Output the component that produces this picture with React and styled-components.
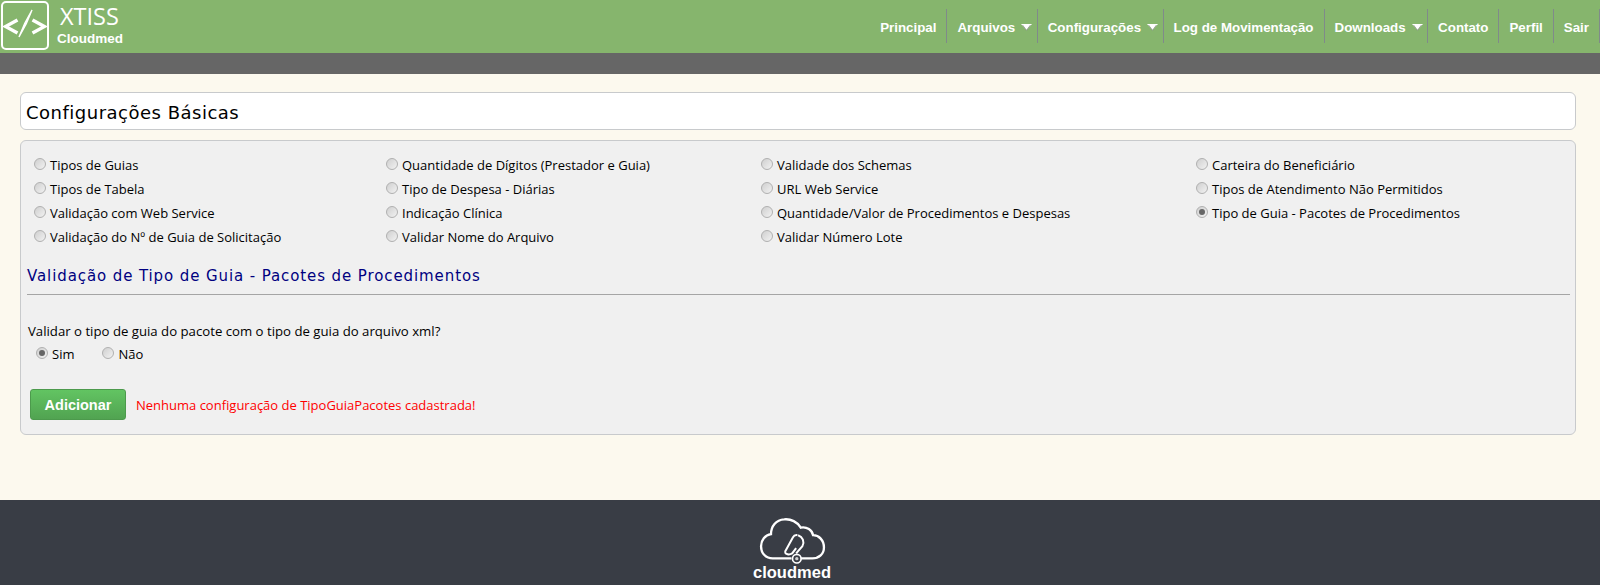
import React from 'react'
import styled, { createGlobalStyle } from 'styled-components'

const green = '#86b56d'
const body = '#fcf9ee'

const GlobalStyle = createGlobalStyle`
  html, body {
    margin: 0;
    padding: 0;
    background: ${body};
    font-family: 'Open Sans', 'Liberation Sans', sans-serif;
  }
`

const Page = styled.div`
  display: flex;
  flex-direction: column;
  width: 1600px;
  height: 585px;
  overflow: hidden;
`

const Header = styled.header`
  display: flex;
  justify-content: space-between;
  align-items: flex-start;
  height: 53px;
  background: ${green};
`

const Brand = styled.div`
  display: flex;
  padding-top: 1px;
  padding-left: 1px;
`

const LogoBox = styled.div`
  box-sizing: border-box;
  width: 48px;
  height: 49px;
  border: 2px solid #fff;
  border-radius: 5px;
`

const BrandText = styled.div`
  display: flex;
  flex-direction: column;
  margin-left: 8px;
  color: #fff;
`

const BrandName = styled.div`
  margin-left: 3px;
  font-family: 'Open Sans', sans-serif;
  font-size: 23.5px;
  line-height: 30px;
`

const BrandSub = styled.div`
  font-family: 'Liberation Sans', sans-serif;
  font-size: 13.5px;
  font-weight: bold;
  line-height: 16px;
`

const Nav = styled.nav`
  display: flex;
  margin-top: 9px;
`

const NavItem = styled.div`
  box-sizing: border-box;
  display: flex;
  align-items: center;
  gap: 6px;
  height: 34px;
  padding: 2px ${p => (p.$caret ? 4.5 : 10)}px 0 10px;
  border-right: 1px solid #808a8a;
  color: #fff;
  font-family: 'Liberation Sans', sans-serif;
  font-size: 13.33px;
  font-weight: bold;
`

const SubBar = styled.div`
  height: 21px;
  background: #666;
`

const Main = styled.main`
  flex: 1;
  padding: 18px 24px 0 20px;
`

const TitleBox = styled.div`
  box-sizing: border-box;
  height: 38px;
  padding-left: 5px;
  border: 1px solid #c8cacc;
  border-radius: 6px;
  background: #fff;
  color: #000;
  font-family: 'DejaVu Sans', sans-serif;
  font-size: 18px;
  letter-spacing: 0.5px;
  line-height: 39px;
`

const Panel = styled.section`
  box-sizing: border-box;
  height: 295px;
  margin-top: 10px;
  padding: 12px 5px 0 6px;
  border: 1px solid #c8cacc;
  border-radius: 6px;
  background: #f0f0f0;
`

const OptionGrid = styled.div`
  display: grid;
  grid-template-columns: 352px 375px 435px 1fr;
  grid-auto-rows: 24px;
  padding-left: 7px;
`

const Option = styled.label`
  display: flex;
  align-items: center;
  gap: 4px;
  color: #000;
  font-size: 13px;
  white-space: nowrap;
`

const Radio = styled.span`
  box-sizing: border-box;
  display: flex;
  align-items: center;
  justify-content: center;
  width: 12px;
  height: 12px;
  margin-top: -2px;
  border: 1px solid #b0b0b0;
  border-radius: 50%;
  background: linear-gradient(135deg, #cfcfcf 0%, #f2f2f2 100%);

  &::after {
    content: '';
    display: ${p => (p.$checked ? 'block' : 'none')};
    width: 6px;
    height: 6px;
    border-radius: 50%;
    background: #666;
  }
`

const SectionTitle = styled.h2`
  margin: 15px 0 0;
  color: #000080;
  font-family: 'DejaVu Sans', sans-serif;
  font-size: 15px;
  font-weight: normal;
  letter-spacing: 0.9px;
  line-height: 24px;
`

const Rule = styled.hr`
  height: 1px;
  margin: 6px 0 0;
  border: 0;
  background: #a5a5a5;
`

const Question = styled.p`
  margin: 27px 0 0 1px;
  color: #000;
  font-size: 13.2px;
  line-height: 18px;
`

const AnswerRow = styled.div`
  display: flex;
  gap: 28px;
  margin: 5px 0 0 9px;
`

const ActionRow = styled.div`
  display: flex;
  align-items: center;
  gap: 10px;
  margin: 26px 0 0 3px;
`

const AddButton = styled.button`
  box-sizing: border-box;
  width: 96px;
  height: 31px;
  border: 1px solid #4c9a4c;
  border-radius: 3px;
  background: linear-gradient(to bottom, #62c462, #51a351);
  color: #fff;
  font-family: 'Liberation Sans', sans-serif;
  font-size: 14.5px;
  font-weight: bold;
`

const ErrorText = styled.span`
  color: #f00;
  font-size: 13px;
`

const Footer = styled.footer`
  display: flex;
  justify-content: center;
  height: 85px;
  background: #393d45;
`

const FooterLogo = styled.div`
  display: flex;
  flex-direction: column;
  align-items: center;
  margin-right: 16px;
  padding-top: 17px;
`

const FooterName = styled.div`
  margin-top: -1px;
  color: #fff;
  font-family: 'Liberation Sans', sans-serif;
  font-size: 16.5px;
  font-weight: bold;
  line-height: 17px;
`

const navItems = [
  { label: 'Principal' },
  { label: 'Arquivos', caret: true },
  { label: 'Configurações', caret: true },
  { label: 'Log de Movimentação' },
  { label: 'Downloads', caret: true },
  { label: 'Contato' },
  { label: 'Perfil' },
  { label: 'Sair' },
]

const options = [
  'Tipos de Guias',
  'Quantidade de Dígitos (Prestador e Guia)',
  'Validade dos Schemas',
  'Carteira do Beneficiário',
  'Tipos de Tabela',
  'Tipo de Despesa - Diárias',
  'URL Web Service',
  'Tipos de Atendimento Não Permitidos',
  'Validação com Web Service',
  'Indicação Clínica',
  'Quantidade/Valor de Procedimentos e Despesas',
  'Tipo de Guia - Pacotes de Procedimentos',
  'Validação do Nº de Guia de Solicitação',
  'Validar Nome do Arquivo',
  'Validar Número Lote',
]

const Caret = () => (
  <svg width="11" height="7" viewBox="0 0 11 7">
    <path d="M0 0 H11 L5.5 6.5 Z" fill="#fff" />
    <path d="M1.5 1 L5.5 6.3 L9.5 1" fill="none" stroke="#5c6658" strokeWidth="0.6" />
  </svg>
)

const CodeIcon = () => (
  <svg width="44" height="45" viewBox="0 0 44 45" fill="none" stroke="#fff">
    <path d="M14.5 17 L2.5 23.5 L14.5 30" strokeWidth="3.4" />
    <path d="M29.5 17 L41.5 23.5 L29.5 30" strokeWidth="3.4" />
    <path d="M16 34 Q21 20 29 7 Q24 21 16 34 Z" strokeWidth="1.4" fill="#fff" />
  </svg>
)

const CloudIcon = () => (
  <svg width="67" height="48" viewBox="115 80 200 145" fill="none" stroke="#fff" strokeWidth="7">
    <path d="M240 205 H275 C295 205 310 192 310 172 C310 150 295 135 277 135 C275 120 258 108 240 112 C230 95 210 85 190 87 C165 88 150 108 150 132 C132 135 120 150 120 168 C120 190 135 205 155 205 H212" />
    <circle cx="228" cy="206" r="13" strokeWidth="5" />
    <circle cx="228" cy="206" r="5" fill="#d0d0d0" stroke="none" />
    <path d="M192 186 L216 142 C219 136 224 134 230 135" strokeWidth="6" />
    <path d="M232 135 C246 140 252 155 245 168 L226 190 M192 186 C194 192 204 196 214 190 L226 174" strokeWidth="6" />
  </svg>
)

export default function App() {
  return (
    <Page>
      <GlobalStyle />
      <Header>
        <Brand>
          <LogoBox><CodeIcon /></LogoBox>
          <BrandText>
            <BrandName>XTISS</BrandName>
            <BrandSub>Cloudmed</BrandSub>
          </BrandText>
        </Brand>
        <Nav>
          {navItems.map(({ label, caret }) => (
            <NavItem key={label} $caret={caret}>
              {label}
              {caret && <Caret />}
            </NavItem>
          ))}
        </Nav>
      </Header>
      <SubBar />
      <Main>
        <TitleBox>Configurações Básicas</TitleBox>
        <Panel>
          <OptionGrid>
            {options.map(label => (
              <Option key={label}>
                <Radio $checked={label.startsWith('Tipo de Guia')} />
                {label}
              </Option>
            ))}
          </OptionGrid>
          <SectionTitle>Validação de Tipo de Guia - Pacotes de Procedimentos</SectionTitle>
          <Rule />
          <Question>Validar o tipo de guia do pacote com o tipo de guia do arquivo xml?</Question>
          <AnswerRow>
            <Option><Radio $checked />Sim</Option>
            <Option><Radio />Não</Option>
          </AnswerRow>
          <ActionRow>
            <AddButton>Adicionar</AddButton>
            <ErrorText>Nenhuma configuração de TipoGuiaPacotes cadastrada!</ErrorText>
          </ActionRow>
        </Panel>
      </Main>
      <Footer>
        <FooterLogo>
          <CloudIcon />
          <FooterName>cloudmed</FooterName>
        </FooterLogo>
      </Footer>
    </Page>
  )
}
